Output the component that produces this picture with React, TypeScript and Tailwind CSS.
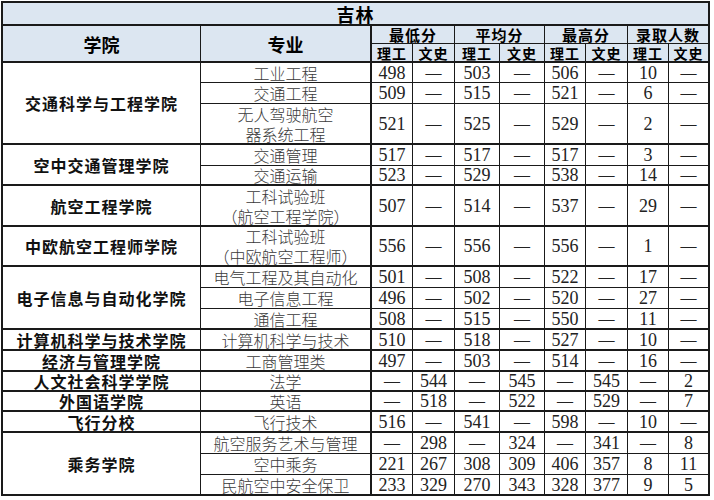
import React from "react";

type Row = { major: string[]; vals: string[] };
type Group = { college: string; rows: Row[] };

const D = "—";

const groups: Group[] = [
  {
    college: "交通科学与工程学院",
    rows: [
      { major: ["工业工程"], vals: ["498", D, "503", D, "506", D, "10", D] },
      { major: ["交通工程"], vals: ["509", D, "515", D, "521", D, "6", D] },
      { major: ["无人驾驶航空", "器系统工程"], vals: ["521", D, "525", D, "529", D, "2", D] },
    ],
  },
  {
    college: "空中交通管理学院",
    rows: [
      { major: ["交通管理"], vals: ["517", D, "517", D, "517", D, "3", D] },
      { major: ["交通运输"], vals: ["523", D, "529", D, "538", D, "14", D] },
    ],
  },
  {
    college: "航空工程学院",
    rows: [{ major: ["工科试验班", "（航空工程学院）"], vals: ["507", D, "514", D, "537", D, "29", D] }],
  },
  {
    college: "中欧航空工程师学院",
    rows: [{ major: ["工科试验班", "（中欧航空工程师）"], vals: ["556", D, "556", D, "556", D, "1", D] }],
  },
  {
    college: "电子信息与自动化学院",
    rows: [
      { major: ["电气工程及其自动化"], vals: ["501", D, "508", D, "522", D, "17", D] },
      { major: ["电子信息工程"], vals: ["496", D, "502", D, "520", D, "27", D] },
      { major: ["通信工程"], vals: ["508", D, "515", D, "550", D, "11", D] },
    ],
  },
  {
    college: "计算机科学与技术学院",
    rows: [{ major: ["计算机科学与技术"], vals: ["510", D, "518", D, "527", D, "10", D] }],
  },
  {
    college: "经济与管理学院",
    rows: [{ major: ["工商管理类"], vals: ["497", D, "503", D, "514", D, "16", D] }],
  },
  {
    college: "人文社会科学学院",
    rows: [{ major: ["法学"], vals: [D, "544", D, "545", D, "545", D, "2"] }],
  },
  {
    college: "外国语学院",
    rows: [{ major: ["英语"], vals: [D, "518", D, "522", D, "529", D, "7"] }],
  },
  {
    college: "飞行分校",
    rows: [{ major: ["飞行技术"], vals: ["516", D, "541", D, "598", D, "10", D] }],
  },
  {
    college: "乘务学院",
    rows: [
      { major: ["航空服务艺术与管理"], vals: [D, "298", D, "324", D, "341", D, "8"] },
      { major: ["空中乘务"], vals: ["221", "267", "308", "309", "406", "357", "8", "11"] },
      { major: ["民航空中安全保卫"], vals: ["233", "329", "270", "343", "328", "377", "9", "5"] },
    ],
  },
];

const cjk = "font-['Noto_Sans_CJK_SC',sans-serif]";
const span: Record<number, string> = { 1: "row-span-1", 2: "row-span-2", 3: "row-span-3" };
const base = "flex items-center justify-center border-[#1a1a1a] overflow-visible whitespace-nowrap";
const head = `${base} ${cjk} bg-[#dce6f1] font-bold text-black`;

export default function App() {
  const cells: React.ReactNode[] = [];
  groups.forEach((g, gi) => {
    g.rows.forEach((r, ri) => {
      const last = ri === g.rows.length - 1;
      const bb = last ? "border-b-2" : "border-b";
      if (ri === 0) {
        cells.push(
          <div
            key={`c${gi}`}
            className={`${base} ${span[g.rows.length]} ${cjk} border-r border-b-2 text-[16px] leading-[18px] font-bold tracking-[1px] text-[#111]`}
          >
            {g.college}
          </div>
        );
      }
      cells.push(
        <div
          key={`m${gi}-${ri}`}
          className={`${base} ${cjk} flex-col border-r-2 ${bb} text-[16px] leading-[20px] font-light text-[#3a3a3a]`}
        >
          {r.major.map((m, mi) => (
            <span key={mi} className="block">
              {m}
            </span>
          ))}
        </div>
      );
      r.vals.forEach((v, vi) => {
        cells.push(
          <div
            key={`v${gi}-${ri}-${vi}`}
            className={`${base} ${vi === 7 ? "border-r-2" : "border-r"} ${bb} font-['Liberation_Serif',serif] text-[#222] ${
              v === D ? "text-[16px] leading-[18px]" : "text-[18px] leading-[18px]"
            }`}
          >
            {v}
          </div>
        );
      });
    });
  });

  return (
    <div className="w-[714px] h-[500px] bg-white overflow-hidden pt-[1px] pl-[1px]">
      <div className="grid grid-cols-[198px_171px_41px_42px_45px_45px_41px_42px_41px_41px] grid-rows-[23px_18px_19px_20px_21px_41px_21px_20px_41px_40px_21px_21px_21px_21px_21px_20px_20px_21px_21px_21px_21px] w-[709px] border-l-2 border-t-2 border-[#1a1a1a]">
        <div className={`${head} col-span-10 border-r-2 border-b-2 text-[18px] leading-[20px] tracking-[1px]`}>吉林</div>
        <div className={`${head} row-span-2 border-r border-b-2 text-[18px] leading-[22px]`}>学院</div>
        <div className={`${head} row-span-2 border-r-2 border-b-2 text-[18px] leading-[22px]`}>专业</div>
        {["最低分", "平均分", "最高分", "录取人数"].map((t, i) => (
          <div
            key={t}
            className={`${head} col-span-2 ${i === 3 ? "border-r-2" : "border-r"} border-b text-[15px] leading-[16px] tracking-[1px]`}
          >
            {t}
          </div>
        ))}
        {Array.from({ length: 8 }).map((_, i) => (
          <div
            key={i}
            className={`${head} ${i === 7 ? "border-r-2" : "border-r"} border-b-2 text-[14px] leading-[16px] tracking-[1px]`}
          >
            {i % 2 === 0 ? "理工" : "文史"}
          </div>
        ))}
        {cells}
      </div>
    </div>
  );
}
